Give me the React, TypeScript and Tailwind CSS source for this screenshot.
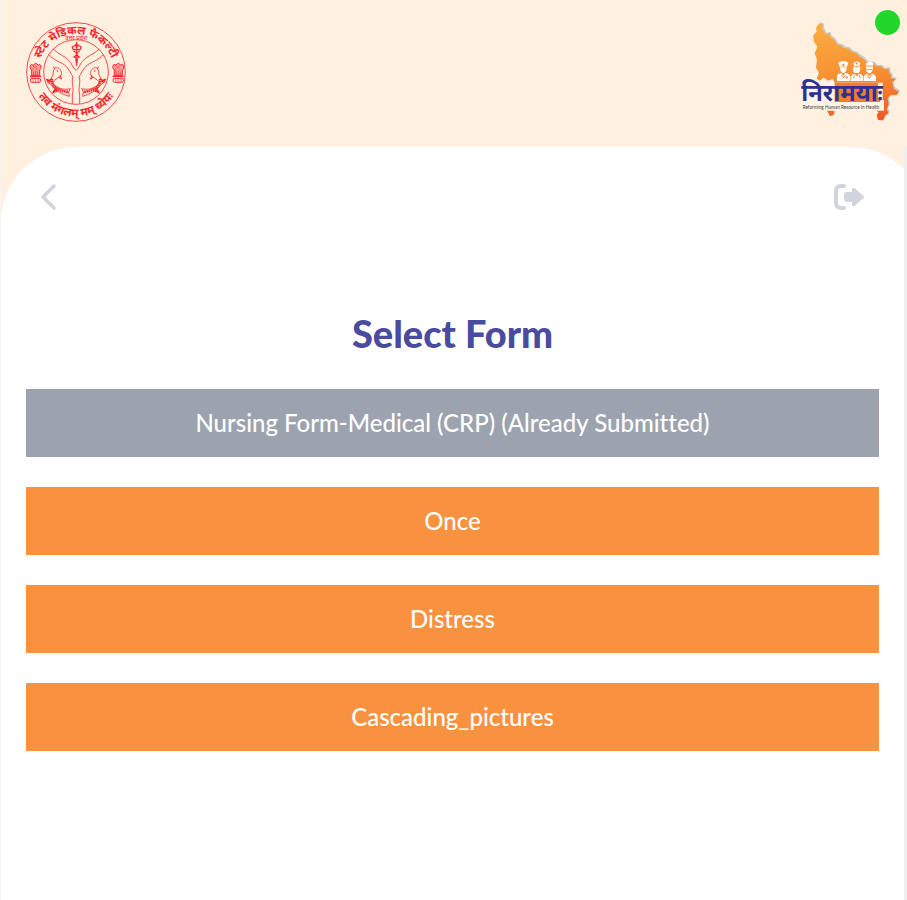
const forms = [
  { name: 'Nursing Form-Medical (CRP) (Already Submitted)', submitted: true },
  { name: 'Once', submitted: false },
  { name: 'Distress', submitted: false },
  { name: 'Cascading_pictures', submitted: false },
];

function Fish() {
  return (
    <g>
      <path
        d="M162 207 C168 200 178 203 182 211 C187 219 184 227 178 231 C169 236 159 242 158 249 C166 261 182 268 199 268 L211 266 L206 276 L208 289 C190 284 166 272 153 254 L142 246 L151 240 C156 230 161 224 160 216 Z"
        fill="#fff0e0"
        stroke="#f5262c"
        strokeWidth="2.5"
      />
      <path
        d="M157 236 C153 242 156 252 164 260 C174 269 188 274 206 276 M152 242 l-8 -1 l4 7 M167 265 l-4 9 l10 -3"
        fill="none"
        stroke="#f5262c"
        strokeWidth="8"
        strokeDasharray="5 1.5"
      />
      <circle cx="172" cy="213" r="2.5" fill="#f5262c" />
      <path d="M176 231 l8 6 l-3 -11 M164 207 l-3 -7" fill="none" stroke="#f5262c" strokeWidth="3" />
    </g>
  );
}

function Lions() {
  return (
    <g fill="none" stroke="#f5262c" strokeWidth="3">
      <path d="M94 193 q-6 6 -3 12 l4 5 v16 h24 v-16 l4 -5 q2 -8 -4 -12 l-5 3 q-7 -12 -14 0 Z" fill="#f5262c" fillOpacity="0.4" />
      <path d="M99 199 q6 6 12 0 M97 207 h5 m6 0 h6 M101 214 v11 m6 -13 v13 m6 -11 v11" strokeWidth="2" />
      <path d="M90 229 h33" strokeWidth="5" />
      <rect x="91" y="235" width="31" height="12" rx="5" strokeWidth="3" />
      <path d="M99 236 v10 m8 -10 v10 m8 -10 v10" strokeWidth="2" />
    </g>
  );
}

function FacultySeal() {
  return (
    <svg viewBox="78 66 300 300" className="size-[100px]" role="img" aria-label="State Medical Faculty">
      <defs>
        <path id="seal-top" d="M114 216 A114 114 0 0 1 342 216" />
        <path id="seal-bottom" d="M94 216 A134 134 0 0 0 362 216" />
      </defs>
      <circle cx="228" cy="216" r="148" fill="none" stroke="#f5262c" strokeWidth="2.5" />
      <circle cx="228" cy="216" r="97" fill="none" stroke="#f5262c" strokeWidth="2.5" />
      <path
        d="M147 164 C160 181 177 183 194 195 C207 205 214 224 219 231 C212 247 224 264 217 283 V311 M309 164 C296 181 279 183 262 195 C249 205 242 224 237 231 C244 247 233 264 239 283 V311 M160 147 C175 164 195 167 209 184 C217 194 222 210 228 210 C234 210 239 194 247 184 C261 167 281 164 298 147"
        fill="none"
        stroke="#f5262c"
        strokeWidth="2.5"
      />
      <path d="M230 125 V198 M224 133 h12" stroke="#f5262c" strokeWidth="3" />
      <path
        d="M217 141 q13 -10 13 4 q0 -14 13 -4 l-3 8 h-20 Z M221 153 q18 8 1 18 q18 7 5 16 M239 153 q-18 8 -1 18 q-18 7 -5 16"
        fill="none"
        stroke="#f5262c"
        strokeWidth="4"
      />
      <Fish />
      <g transform="translate(456 0) scale(-1 1)">
        <Fish />
      </g>
      <Lions />
      <g transform="translate(248 0)">
        <Lions />
      </g>
      <g fill="#f5262c" fontFamily="'Noto Sans Devanagari', 'Noto Sans', sans-serif" fontWeight="700" textAnchor="middle">
        <text fontSize="34">
          <textPath href="#seal-top" startOffset="50%">स्टेट मेडिकल फैकल्टी</textPath>
        </text>
        <text fontSize="34">
          <textPath href="#seal-bottom" startOffset="50%">तव मंगलम् मम् ध्येयः</textPath>
        </text>
        <text x="228" y="120" fontSize="18" fontWeight="400">उत्तर प्रदेश</text>
      </g>
    </svg>
  );
}

function NiramayaLogo() {
  const outline =
    'M118 70 L128 75 L127 86 L136 103 L147 99 L151 111 L163 120 L171 134 L184 137 L190 143 L205 146 L216 156 L228 159 L240 170 L250 176 L259 186 L280 190 L289 199 L302 199 L312 207 L326 206 L328 220 L335 227 L332 234 L348 238 L337 247 L341 266 L357 276 L349 286 L333 285 L323 295 L326 314 L320 328 L326 340 L314 348 L310 361 L294 360 L290 344 L296 337 L281 326 L160 324 L162 344 L150 349 L143 335 L128 320 L121 306 L110 236 L117 218 L108 203 L111 179 L104 160 L112 140 L101 124 L100 105 L110 96 L108 83 Z';
  return (
    <svg viewBox="60 66 300 300" className="size-[100px]" role="img" aria-label="Niramaya">
      <defs>
        <linearGradient id="map-fill" gradientUnits="userSpaceOnUse" x1="160" y1="90" x2="200" y2="370">
          <stop offset="0" stopColor="#fbaa3e" />
          <stop offset="0.5" stopColor="#f79032" />
          <stop offset="1" stopColor="#f15a24" />
        </linearGradient>
      </defs>
      <path d={outline} fill="#c9c8c8" transform="translate(4 -4)" />
      <path d={outline} fill="url(#map-fill)" />
      <path d="M66 240 Q80 226 105 230 L118 242 L131 233 L145 242 L158 236 L164 248 H308 V301 H312 V332 H68 V306 H64 Z" fill="#fff3e6" />
      <path d="M164 249 H294 V294 H300 V306 H164 Z" fill="#f47d2c" />
      <g fill="#ffffff">
        <path d="M175 188 Q190 178 205 188 L201 200 H179 Z M180 202 H200 Q200 218 190 219 Q180 218 180 202 Z M171 243 V227 Q174 220 184 219 L190 227 L196 219 Q207 220 210 228 V243 Z" />
        <path d="M220 189 Q230 180 241 189 L238 196 Q244 212 236 219 H223 Q216 209 222 197 Z M212 243 L212 229 Q216 221 224 221 L230 229 L237 221 Q247 222 249 231 V243 Z" />
        <path d="M258 191 Q269 176 280 191 L278 208 Q276 219 268 220 Q260 219 259 208 Z M251 243 V230 Q254 222 262 221 L268 228 L276 221 Q286 223 288 231 V243 Z" />
      </g>
      <path
        d="M190 191 v9 m-5 -5 h10 M230 187 v7 m-4 -3 h8 M223 200 h14 M259 198 h20 M261 209 h15 M184 224 l6 10 l6 -10 M200 228 v8 m-4 -4 h8 M224 224 l-4 11 M237 224 l4 11 M262 225 l6 11 l8 -11"
        fill="none"
        stroke="#f47d2c"
        strokeWidth="2.5"
      />
      <text x="64" y="303" fontSize="71" fontWeight="700" fill="#2e3192" fontFamily="'Noto Sans Devanagari', 'Noto Sans', sans-serif">
        निरामयाः
      </text>
      <text x="68" y="328" fontSize="14" fill="#3d3b3c" fontFamily="Lato, sans-serif">
        Reforming Human Resource in Health
      </text>
    </svg>
  );
}

export default function App() {
  return (
    <div className="flex min-h-screen flex-col border-l border-[#f4f4f4] bg-[#fff0e0] font-[Lato,'Open_Sans',sans-serif] [font-variant-ligatures:none]">
      <header className="relative flex justify-between pt-[22px] pr-[7px] pb-[25px] pl-[25px]">
        <FacultySeal />
        <NiramayaLogo />
        <span role="status" aria-label="Online" className="absolute top-[10px] right-[7px] size-[25px] rounded-full bg-[#20d72a]" />
      </header>
      <div className="flex grow flex-col overflow-hidden border-r-3 border-[#f0f0f0]">
        <main className="-mr-[22px] grow rounded-t-[75px] bg-white pt-[35px] pr-[47px] pb-8 pl-[25px]">
          <nav className="flex items-center justify-between pr-[14px] pl-[13px]">
            <button type="button" aria-label="Back" className="text-[#d1d5db]">
              <svg viewBox="0 0 20 30" className="h-[30px] w-[20px]" fill="none" stroke="currentColor" strokeWidth="3.5" strokeLinecap="round" strokeLinejoin="round">
                <path d="M15 4 L4 15 L15 26" />
              </svg>
            </button>
            <button type="button" aria-label="Log out" className="text-[#d1d5db]">
              <svg viewBox="0 0 32 30" className="h-[30px] w-[32px]">
                <path d="M11 4 H8 Q3 4 3 9 V21 Q3 26 8 26 H11" fill="none" stroke="currentColor" strokeWidth="4" strokeLinecap="round" />
                <path d="M14 10 H19 V7 Q19.500 5 21.500 6 L30.500 14 Q31.500 15 30.500 16 L21.500 24 Q19.500 25 19 23 V20 H14 Q11 20 11 17 V13 Q11 10 14 10 Z" fill="currentColor" />
              </svg>
            </button>
          </nav>
          <h1 className="mt-[101px] text-center text-[38px] leading-[40px] font-black text-[#4a4a9e]">Select Form</h1>
          <ul className="mt-9 flex flex-col gap-[30px]">
            {forms.map((form) => (
              <li key={form.name}>
                <button
                  type="button"
                  disabled={form.submitted}
                  className={
                    form.submitted
                      ? 'h-[68px] w-full bg-[#9ca3af] text-[24px] font-medium text-white'
                      : 'h-[68px] w-full bg-[#f8923f] text-[24px] font-medium text-white'
                  }
                >
                  {form.name}
                </button>
              </li>
            ))}
          </ul>
        </main>
      </div>
    </div>
  );
}
